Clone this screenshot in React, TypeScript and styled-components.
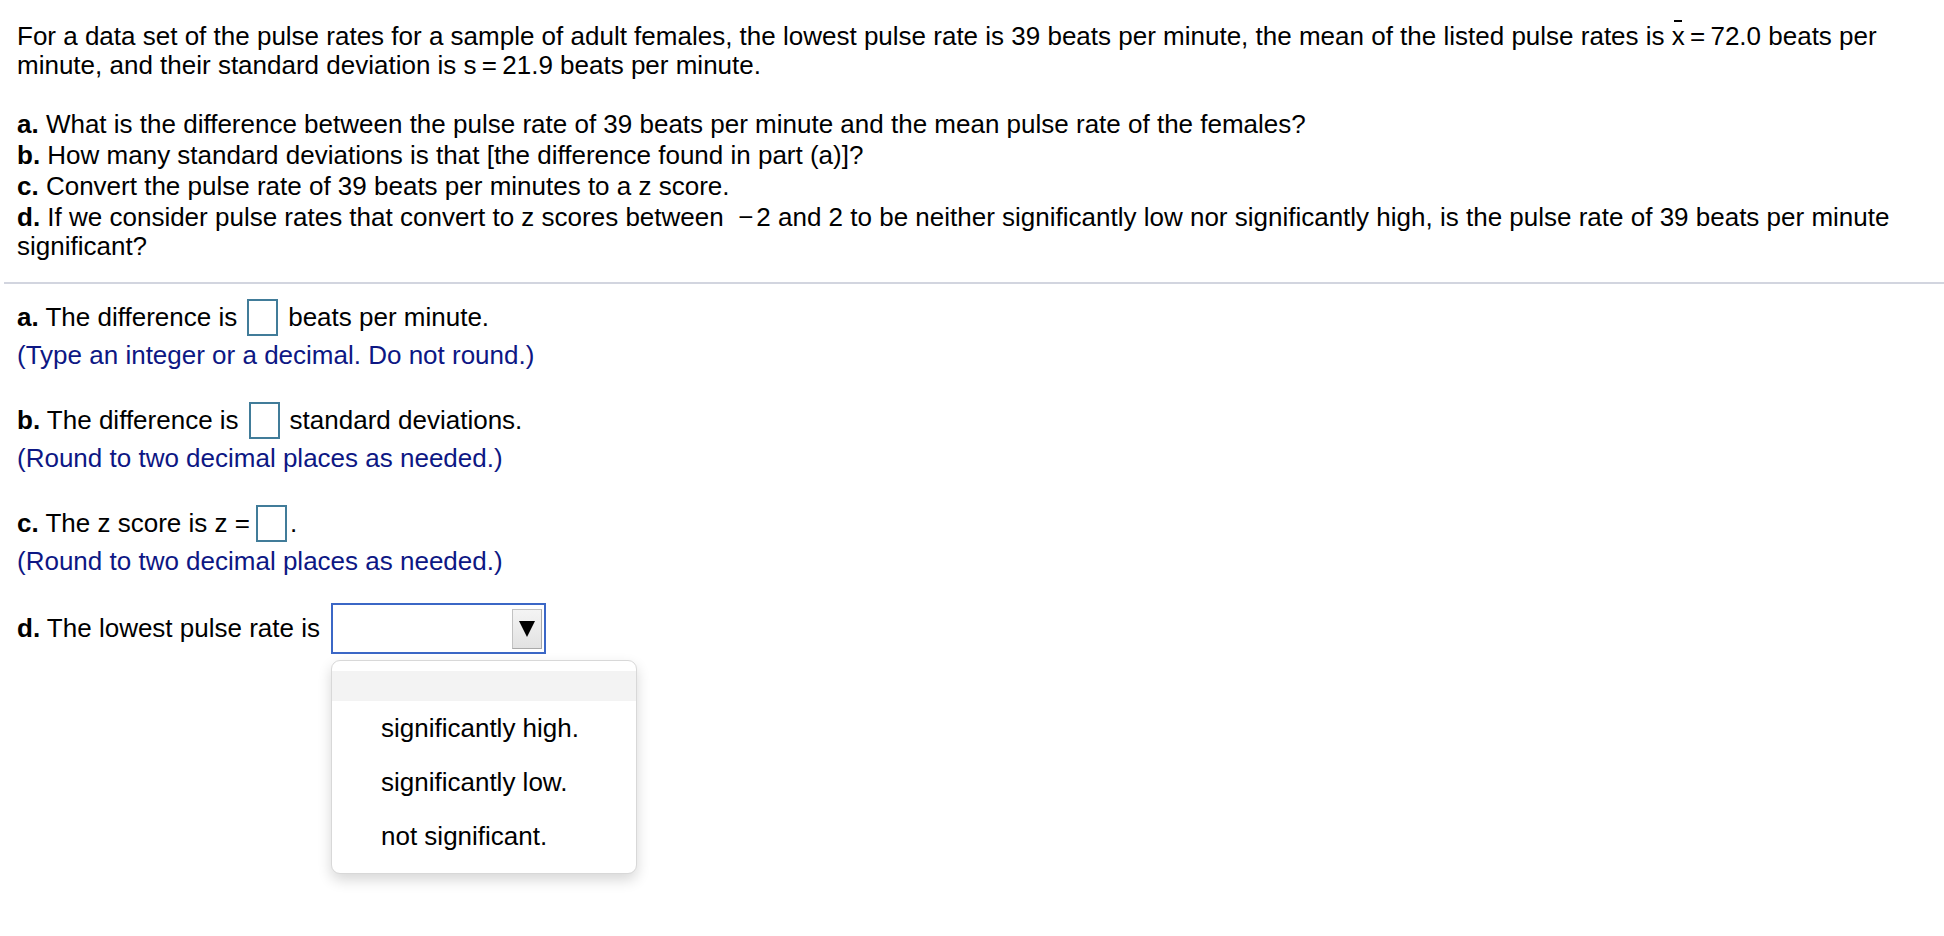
import React from "react";
import styled, { createGlobalStyle } from "styled-components";

const GlobalStyle = createGlobalStyle`
  html, body { margin: 0; padding: 0; background: #ffffff; }
  body {
    font-family: "Liberation Sans", Arial, Helvetica, sans-serif;
    font-size: 26px;
    color: #000000;
  }
`;

const Page = styled.div`
  box-sizing: border-box;
  min-height: 936px;
  padding: 22px 17px 60px 17px;
`;

const Intro = styled.p`
  margin: 0 0 30px 0;
  line-height: 29px;
`;

const QuestionList = styled.div`
  display: flex;
  flex-direction: column;
  gap: 2px;
`;

const QuestionLine = styled.div`
  line-height: 29px;
`;

const Label = styled.b`
  font-weight: 700;
`;

const Xbar = styled.span`
  position: relative;
  display: inline-block;
  &::before {
    content: "";
    position: absolute;
    left: 50%;
    top: -2px;
    width: 8px;
    margin-left: -4px;
    height: 2px;
    background: #000;
  }
`;

const Tight = styled.span`
  margin: 0 -2px;
`;

const Minus = styled.span`
  margin-right: 3px;
`;

const Divider = styled.hr`
  border: none;
  height: 2px;
  background: #d2d5df;
  margin: 21px -17px 0 -13px;
`;

const Answers = styled.div`
  padding-top: 13px;
  display: flex;
  flex-direction: column;
  gap: 30px;
`;

const AnswerBlock = styled.div<{ $pull?: number }>`
  display: flex;
  flex-direction: column;
  margin-top: ${(p) => (p.$pull ? -p.$pull : 0)}px;
`;

const Row = styled.div<{ $tall?: boolean }>`
  display: flex;
  align-items: center;
  height: ${(p) => (p.$tall ? "51px" : "40px")};
  white-space: pre;
`;

const InputBox = styled.span<{ $ml?: number; $mr?: number }>`
  display: inline-block;
  box-sizing: border-box;
  width: 31px;
  height: 37px;
  border: 2px solid #417c99;
  background: #fff;
  margin-left: ${(p) => p.$ml ?? 10}px;
  margin-right: ${(p) => p.$mr ?? 10}px;
`;

const Hint = styled.div`
  margin-top: 4px;
  line-height: 29px;
  color: #0d1784;
`;

const SelectWrap = styled.div`
  position: relative;
  margin-left: 11px;
`;

const SelectBox = styled.div`
  box-sizing: border-box;
  width: 215px;
  height: 51px;
  border: 2px solid #3b67c6;
  background: #fff;
  display: flex;
  align-items: center;
  justify-content: flex-end;
  padding-right: 2px;
`;

const ArrowButton = styled.div`
  box-sizing: border-box;
  width: 30px;
  height: 40px;
  background: linear-gradient(#f4f4f4, #e2e2e2);
  border: 1px solid #c2c2c2;
  border-right-color: #a9a9a9;
  border-bottom-color: #a9a9a9;
  display: flex;
  align-items: center;
  justify-content: center;
`;

const Menu = styled.div`
  position: absolute;
  top: 57px;
  left: 0;
  width: 306px;
  box-sizing: border-box;
  background: #fff;
  border: 1px solid #d8d8d8;
  border-radius: 9px;
  box-shadow: 0 6px 14px rgba(0, 0, 0, 0.16);
  padding: 10px 0 10px 0;
  overflow: hidden;
  z-index: 10;
`;

const MenuBlank = styled.div`
  height: 30px;
  background: #f3f3f3;
`;

const MenuItem = styled.div`
  height: 54px;
  display: flex;
  align-items: center;
  padding-left: 49px;
  white-space: nowrap;
`;

export default function App() {
  return (
    <>
      <GlobalStyle />
      <Page>
        <Intro>
          For a data set of the pulse rates for a sample of adult females, the lowest pulse rate is 39 beats per
          minute, the mean of the listed pulse rates is <Xbar>x</Xbar> <Tight>=</Tight> 72.0 beats per minute, and
          their standard deviation is s <Tight>=</Tight> 21.9 beats per minute.
        </Intro>
        <QuestionList>
          <QuestionLine>
            <Label>a.</Label> What is the difference between the pulse rate of 39 beats per minute and the mean pulse
            rate of the females?
          </QuestionLine>
          <QuestionLine>
            <Label>b.</Label> How many standard deviations is that [the difference found in part (a)]?
          </QuestionLine>
          <QuestionLine>
            <Label>c.</Label> Convert the pulse rate of 39 beats per minutes to a z score.
          </QuestionLine>
          <QuestionLine>
            <Label>d.</Label> If we consider pulse rates that convert to z scores between {"\u00a0"}
            <Minus>−</Minus>2 and 2 to be neither significantly low nor significantly high, is the pulse rate of 39
            beats per minute significant?
          </QuestionLine>
        </QuestionList>
        <Divider />
        <Answers>
          <AnswerBlock>
            <Row>
              <Label>a.</Label> The difference is
              <InputBox />
              beats per minute.
            </Row>
            <Hint>(Type an integer or a decimal. Do not round.)</Hint>
          </AnswerBlock>
          <AnswerBlock>
            <Row>
              <Label>b.</Label> The difference is
              <InputBox />
              standard deviations.
            </Row>
            <Hint>(Round to two decimal places as needed.)</Hint>
          </AnswerBlock>
          <AnswerBlock>
            <Row>
              <Label>c.</Label> The z score is z =
              <InputBox $ml={6} $mr={3} />.
            </Row>
            <Hint>(Round to two decimal places as needed.)</Hint>
          </AnswerBlock>
          <AnswerBlock $pull={3}>
            <Row $tall>
              <Label>d.</Label> The lowest pulse rate is
              <SelectWrap>
                <SelectBox>
                  <ArrowButton>
                    <svg width="16" height="18" viewBox="0 0 16 18">
                      <polygon points="0,1 16,1 8,17" fill="#000" />
                    </svg>
                  </ArrowButton>
                </SelectBox>
                <Menu>
                  <MenuBlank />
                  <MenuItem>significantly high.</MenuItem>
                  <MenuItem>significantly low.</MenuItem>
                  <MenuItem>not significant.</MenuItem>
                </Menu>
              </SelectWrap>
            </Row>
          </AnswerBlock>
        </Answers>
      </Page>
    </>
  );
}
